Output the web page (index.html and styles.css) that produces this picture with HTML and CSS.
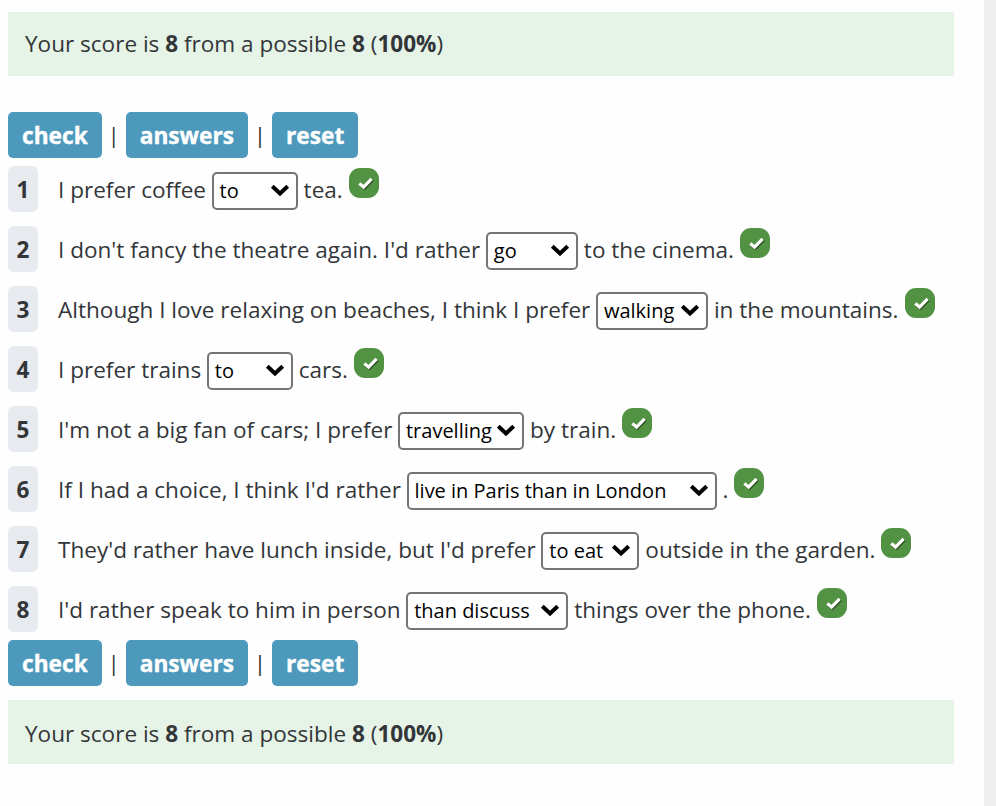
FILE: index.html
```html
<!DOCTYPE html>
<html lang="en">
<head>
<meta charset="utf-8">
<title>Preferences exercise</title>
<link rel="stylesheet" href="styles.css">
</head>
<body>
<svg class="defs" aria-hidden="true">
  <symbol id="arrow" viewBox="0 0 20 14"><path d="M2.300 3.200 10 10.400 17.700 3.200" fill="none" stroke="#000" stroke-width="4"/></symbol>
  <symbol id="tick" viewBox="0 0 30 30"><rect width="30" height="30" rx="11" fill="#529343"/><path d="M11.200 17.200 15.600 20.400 23.800 12" fill="none" stroke="#2b4d22" stroke-width="2.800"/><path d="M10.300 15.600 14.600 19 22.600 10.800" fill="none" stroke="#fff" stroke-width="3.200"/></symbol>
</svg>
<main class="page">
  <p class="score">Your score is <b>8</b> from a possible <b>8</b> (<b>100%</b>)</p>
  <div class="actions actions-top"><button>check</button><i>|</i><button>answers</button><i>|</i><button>reset</button></div>
  <ol class="questions">
    <li><b class="num">1</b><span class="text">I prefer coffee</span><span class="select w86">to<svg><use href="#arrow"/></svg></span><span class="text">tea.</span><svg class="tick"><use href="#tick"/></svg></li>
    <li><b class="num">2</b><span class="text">I don't fancy the theatre again. I'd rather</span><span class="select w92">go<svg><use href="#arrow"/></svg></span><span class="text">to the cinema.</span><svg class="tick"><use href="#tick"/></svg></li>
    <li><b class="num">3</b><span class="text">Although I love relaxing on beaches, I think I prefer</span><span class="select w112">walking<svg><use href="#arrow"/></svg></span><span class="text">in the mountains.</span><svg class="tick"><use href="#tick"/></svg></li>
    <li><b class="num">4</b><span class="text">I prefer trains</span><span class="select w86">to<svg><use href="#arrow"/></svg></span><span class="text">cars.</span><svg class="tick"><use href="#tick"/></svg></li>
    <li><b class="num">5</b><span class="text">I'm not a big fan of cars; I prefer</span><span class="select w126">travelling<svg><use href="#arrow"/></svg></span><span class="text">by train.</span><svg class="tick"><use href="#tick"/></svg></li>
    <li><b class="num">6</b><span class="text">If I had a choice, I think I'd rather</span><span class="select w310">live in Paris than in London<svg><use href="#arrow"/></svg></span><span class="text">.</span><svg class="tick"><use href="#tick"/></svg></li>
    <li><b class="num">7</b><span class="text">They'd rather have lunch inside, but I'd prefer</span><span class="select w98">to eat<svg><use href="#arrow"/></svg></span><span class="text">outside in the garden.</span><svg class="tick"><use href="#tick"/></svg></li>
    <li><b class="num">8</b><span class="text">I'd rather speak to him in person</span><span class="select w162">than discuss<svg><use href="#arrow"/></svg></span><span class="text">things over the phone.</span><svg class="tick"><use href="#tick"/></svg></li>
  </ol>
  <div class="actions"><button>check</button><i>|</i><button>answers</button><i>|</i><button>reset</button></div>
  <p class="score score-bottom">Your score is <b>8</b> from a possible <b>8</b> (<b>100%</b>)</p>
</main>
</body>
</html>
```
FILE: styles.css
```css
* { box-sizing: border-box; }
body {
  margin: 0;
  min-height: 806px;
  background: #fefefe;
  border-right: 12px solid #efefef;
  color: #333639;
  font: 22.55px/30px "Open Sans", sans-serif;
}
.defs { display: none; }
.page { padding: 12px 30px 0 8px; }
.score {
  margin: 0;
  height: 64px;
  padding: 17px 17px;
  background: #e6f3e7;
}
.score-bottom { margin-top: 14px; padding-top: 19px; }
.actions { display: flex; align-items: center; height: 46px; }
.actions-top { margin-top: 36px; }
.actions i { width: 24px; text-align: center; font-style: normal; }
.actions button {
  height: 46px;
  padding: 2px 14px 0;
  border: 0;
  border-radius: 5px;
  background: #4c99bc;
  color: #fff;
  font: 700 22.7px/44px "Open Sans", sans-serif;
  -webkit-text-stroke: 0.4px #fff;
}
.questions { list-style: none; margin: 8px 0; padding: 0; display: grid; row-gap: 14px; }
.questions li { display: flex; align-items: center; height: 46px; white-space: nowrap; }
.text { padding-top: 2px; }
.num {
  width: 30px;
  height: 46px;
  margin-right: 20px;
  padding-top: 1px;
  border-radius: 6px;
  background: #e7ebf0;
  text-align: center;
  line-height: 46px;
}
.select {
  display: flex;
  align-items: center;
  justify-content: space-between;
  height: 38px;
  margin: 4px 6px 0 5.600px;
  padding: 0 6px 0 6px;
  border: 2px solid #757575;
  border-radius: 5px;
  background: #fff;
  color: #000;
  font-size: 20px;
}
.select svg { width: 20px; height: 14px; flex: none; margin-bottom: 2px; }
.w86 { width: 86px; }
.w92 { width: 92px; }
.w98 { width: 98px; }
.w112 { width: 112px; }
.w126 { width: 126px; }
.w162 { width: 162px; }
.w310 { width: 310px; }
.tick { width: 30px; height: 30px; margin: 2px 0 0 6px; align-self: flex-start; }
```
